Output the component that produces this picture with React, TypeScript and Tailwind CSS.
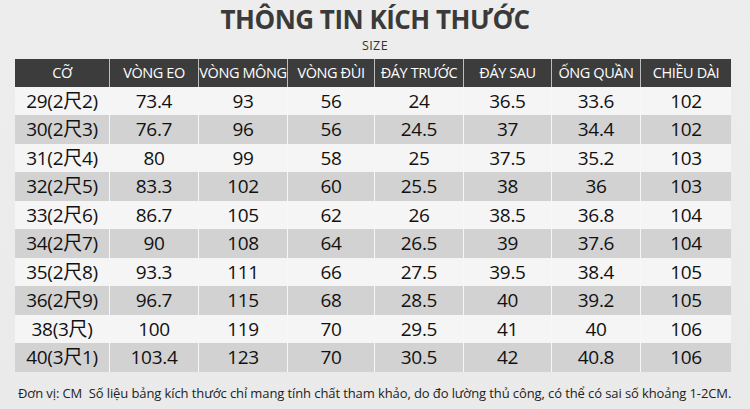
const headers = ["CỠ", "VÒNG EO", "VÒNG MÔNG", "VÒNG ĐÙI", "ĐÁY TRƯỚC", "ĐÁY SAU", "ỐNG QUẦN", "CHIỀU DÀI"];

const rows = [
  ["29(2尺2)", "73.4", "93", "56", "24", "36.5", "33.6", "102"],
  ["30(2尺3)", "76.7", "96", "56", "24.5", "37", "34.4", "102"],
  ["31(2尺4)", "80", "99", "58", "25", "37.5", "35.2", "103"],
  ["32(2尺5)", "83.3", "102", "60", "25.5", "38", "36", "103"],
  ["33(2尺6)", "86.7", "105", "62", "26", "38.5", "36.8", "104"],
  ["34(2尺7)", "90", "108", "64", "26.5", "39", "37.6", "104"],
  ["35(2尺8)", "93.3", "111", "66", "27.5", "39.5", "38.4", "105"],
  ["36(2尺9)", "96.7", "115", "68", "28.5", "40", "39.2", "105"],
  ["38(3尺)", "100", "119", "70", "29.5", "41", "40", "106"],
  ["40(3尺1)", "103.4", "123", "70", "30.5", "42", "40.8", "106"],
];

const cols = "grid grid-cols-[95px_89px_89px_87px_89px_88px_89px_90px]";

export default function App() {
  return (
    <main
      className="h-[409px] w-[750px] overflow-hidden bg-[linear-gradient(180deg,#ededed_0%,#eaeaea_100%)] text-[#111]"
      style={{ fontFamily: '"Open Sans", "Noto Sans CJK SC", sans-serif' }}
    >
      <h1 className="pt-[4px] text-center text-[26px] font-bold leading-[30px] tracking-[-0.5px] text-[#3a3a3a]">THÔNG TIN KÍCH THƯỚC</h1>
      <p className="mt-[4.6px] text-center text-[12.5px] leading-[13px] tracking-[0.4px] text-[#333]">SIZE</p>

      <section className="mx-[15px] mt-[7.4px] w-[716px]">
        <div className={`${cols} h-[28px] bg-[#3c3c3c] text-white`}>
          {headers.map((h, i) => (
            <div
              key={h}
              className={`flex items-center justify-center whitespace-nowrap text-[14.5px] tracking-[-0.4px] ${i < 7 ? "border-r border-[#bdbdbd]" : ""}`}
            >
              {h}
            </div>
          ))}
        </div>
        {rows.map((r, ri) => (
          <div key={r[0]} className={`${cols} h-[28.5px] ${ri % 2 ? "bg-[#d2d2d2]" : "bg-[#f5f5f5]"}`}>
            {r.map((c, i) => (
              <div
                key={i}
                className={`flex items-center justify-center whitespace-nowrap text-[19px] tracking-[-0.3px] ${i < 7 ? "border-r-[1.5px] border-[#f7f7f7]" : ""}`}
              >
                {c}
              </div>
            ))}
          </div>
        ))}
      </section>

      <p className="mt-[12px] pl-[18px] whitespace-pre text-[13px] leading-[18px] tracking-[-0.1px] text-[#222]">
        Đơn vị: CM  Số liệu bảng kích thước chỉ mang tính chất tham khảo, do đo lường thủ công, có thể có sai số khoảng 1-2CM.
      </p>
    </main>
  );
}
